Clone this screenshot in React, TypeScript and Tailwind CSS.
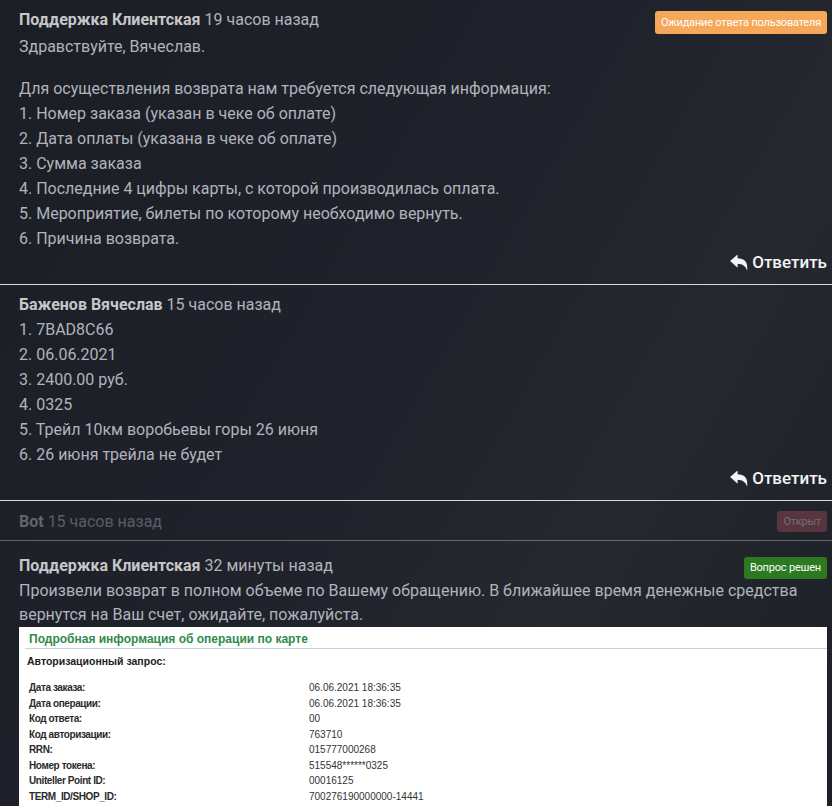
type Msg = {
  author: string;
  time: string;
  lines: string[];
  greeting?: string;
  badge?: { label: string; className: string };
  reply?: boolean;
};

const messages: Msg[] = [
  {
    author: "Поддержка Клиентская",
    time: "19 часов назад",
    greeting: "Здравствуйте, Вячеслав.",
    lines: [
      "Для осуществления возврата нам требуется следующая информация:",
      "1. Номер заказа (указан в чеке об оплате)",
      "2. Дата оплаты (указана в чеке об оплате)",
      "3. Сумма заказа",
      "4. Последние 4 цифры карты, с которой производилась оплата.",
      "5. Мероприятие, билеты по которому необходимо вернуть.",
      "6. Причина возврата.",
    ],
    badge: { label: "Ожидание ответа пользователя", className: "bg-[#f6a85a] text-white" },
    reply: true,
  },
  {
    author: "Баженов Вячеслав",
    time: "15 часов назад",
    lines: [
      "1. 7BAD8C66",
      "2. 06.06.2021",
      "3. 2400.00 руб.",
      "4. 0325",
      "5. Трейл 10км воробьевы горы 26 июня",
      "6. 26 июня трейла не будет",
    ],
    reply: true,
  },
];

const rows = [
  ["Дата заказа:", "06.06.2021 18:36:35"],
  ["Дата операции:", "06.06.2021 18:36:35"],
  ["Код ответа:", "00"],
  ["Код авторизации:", "763710"],
  ["RRN:", "015777000268"],
  ["Номер токена:", "515548******0325"],
  ["Uniteller Point ID:", "00016125"],
  ["TERM_ID/SHOP_ID:", "700276190000000-14441"],
];

const Header = ({ author, time }: { author: string; time: string }) => (
  <div>
    <span className="font-bold text-[#c6c7c9]">{author}</span> {time}
  </div>
);

// filled "reply" arrow like the font-awesome one
const ReplyIcon = () => (
  <svg viewBox="0 0 20 18" className="h-[17px] w-[19px]" fill="currentColor">
    <path d="M0 7.5L8 0.5V4.5C14.5 4.5 19.5 8 18 17.5C16.5 12.5 13 10.5 8 10.5V14.5Z" />
  </svg>
);

const ReplyLink = () => (
  <div className="flex justify-end leading-[23px]">
    <a className="flex items-center gap-[3px] text-[17px] font-medium text-[#f2f3f5]">
      <ReplyIcon />
      Ответить
    </a>
  </div>
);

const Receipt = () => (
  <div className="bg-white pb-[4px]" style={{ fontFamily: '"Liberation Sans", Arial, sans-serif' }}>
    <div className="ml-[6px] border-b border-[#c5d2da] pl-[4px] pt-[4px] pb-[1px] text-[12px] font-bold leading-[16px] text-[#2f8a4c]">
      Подробная информация об операции по карте
    </div>
    <div className="pl-[8px] pt-[5px] text-[10.5px] font-bold leading-[14px] text-[#222]">
      Авторизационный запрос:
    </div>
    <div className="mt-[12px] pl-[10px] text-[10px] leading-[15.5px] text-[#2a2a2a]">
      {rows.map(([k, v]) => (
        <div key={k} className="grid grid-cols-[280px_1fr]">
          <span className="font-bold tracking-[-0.4px]">{k}</span>
          <span className="text-[#333]">{v}</span>
        </div>
      ))}
    </div>
  </div>
);

export default function App() {
  return (
    <div
      className="min-h-[806px] overflow-hidden bg-[linear-gradient(120deg,#1c1e26_0%,#20222b_45%,#262830_70%,#1d1f27_100%)] text-[16px] leading-[25px] text-[#b0b4bb]"
      style={{ fontFamily: 'Roboto, "Noto Sans", sans-serif' }}
    >
      {messages.map((m) => (
        <div key={m.author} className="border-b border-[#d8d9db] pb-[10px] pl-[19px] pr-[5px] pt-[7px]">
          <div className="flex items-start justify-between">
            <Header author={m.author} time={m.time} />
            {m.badge && (
              <span
                className={`mt-[4px] rounded-[3px] px-[6px] text-[11px] leading-[23px] tracking-[-0.2px] ${m.badge.className}`}
              >
                {m.badge.label}
              </span>
            )}
          </div>
          {m.greeting && <div className="mb-[17px]">{m.greeting}</div>}
          {m.lines.map((l) => (
            <div key={l}>{l}</div>
          ))}
          {m.reply && <ReplyLink />}
        </div>
      ))}

      <div className="flex items-center justify-between border-b border-[#c9cacc] pb-[6px] pl-[19px] pr-[5px] pt-[8px] opacity-40">
        <Header author="Bot" time="15 часов назад" />
        <span className="rounded-[3px] bg-[#a9505c] px-[6px] text-[11px] leading-[21px] tracking-[-0.2px] text-[#f3d6da]">
          Открыт
        </span>
      </div>

      <div className="pl-[19px] pr-[5px] pt-[12px]">
        <div className="flex items-start justify-between">
          <Header author="Поддержка Клиентская" time="32 минуты назад" />
          <span className="mt-[4px] rounded-[3px] bg-[#2b7a1f] px-[6px] text-[11px] leading-[22px] tracking-[-0.2px] text-white">
            Вопрос решен
          </span>
        </div>
        <div className="leading-[24px]">
          Произвели возврат в полном объеме по Вашему обращению. В ближайшее время денежные средства вернутся на Ваш
          счет, ожидайте, пожалуйста.
        </div>
        <Receipt />
      </div>
    </div>
  );
}
